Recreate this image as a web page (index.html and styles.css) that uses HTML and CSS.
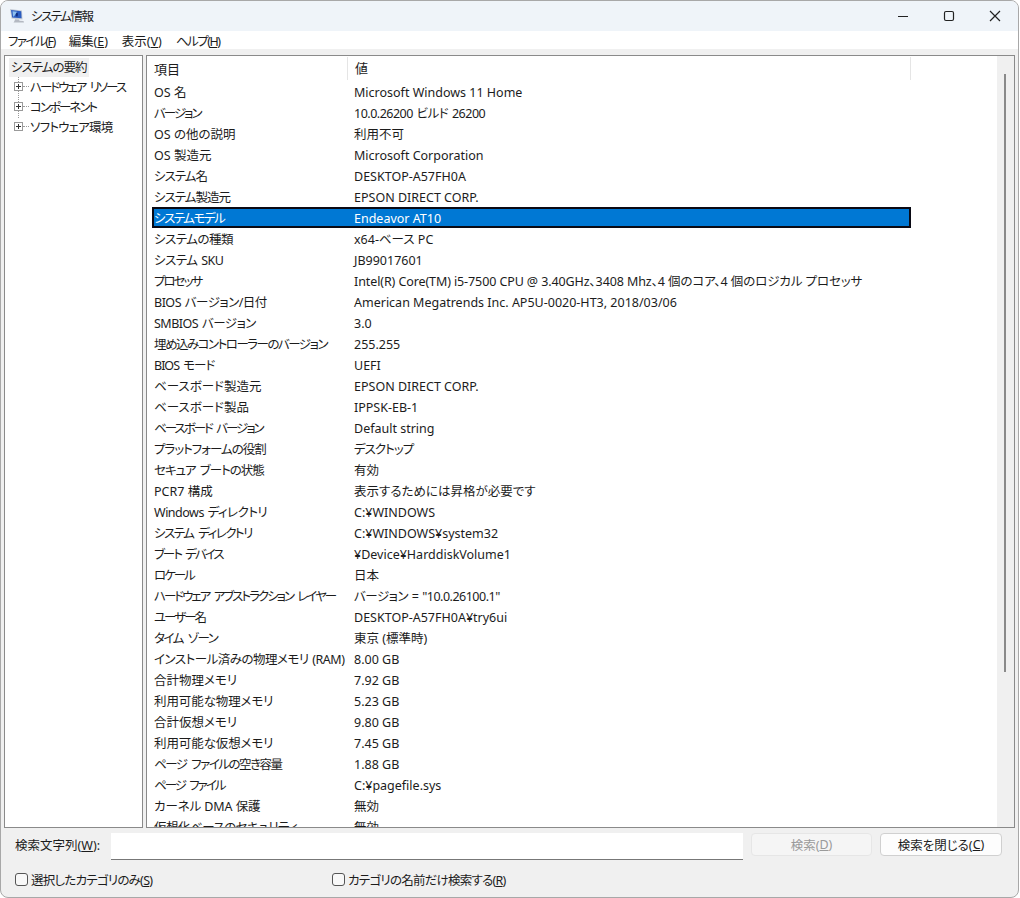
FILE: index.html
```html
<!DOCTYPE html>
<html lang="ja">
<head>
<meta charset="utf-8">
<title>システム情報</title>
<link rel="stylesheet" href="styles.css">
</head>
<body>
<div class="window">
  <header class="titlebar">
    <svg class="app-icon" width="16" height="16" viewBox="0 0 16 16">
      <path d="M1 1 L13 2.5 L13.5 11.5 L2.5 10.5 Z" fill="#c4cad4"/>
      <path d="M2 2 L12.2 3.3 L12.6 10.3 L3.2 9.5 Z" fill="#2a5cc0"/>
      <path d="M3.5 3.2 L8 3.8 L5 8.5 L4 8.4 Z" fill="#8fc0ee"/>
      <path d="M7 5 L9 5.3 L8.6 8.5 L6.8 8.3 Z" fill="#12307f"/>
      <path d="M6 11.2 L10 11.5 L10.5 12.8 L14.5 13 L15 14.5 L4.5 14.5 L5.5 13 Z" fill="#b4b9c2"/>
    </svg>
    <span class="title t3">システム情報</span>
    <div class="controls">
      <svg width="46" height="30" viewBox="0 0 46 30"><path d="M18 15.5H28" stroke="#222" stroke-width="1.2"/></svg>
      <svg width="46" height="30" viewBox="0 0 46 30"><rect x="18.5" y="10.5" width="9" height="9" rx="1.5" fill="none" stroke="#222" stroke-width="1.2"/></svg>
      <svg width="46" height="30" viewBox="0 0 46 30"><path d="M18 10L28 20M28 10L18 20" stroke="#222" stroke-width="1.2"/></svg>
    </div>
  </header>
  <nav class="menubar">
    <span class="menu t3">ファイル(<u>F</u>)</span>
    <span class="menu t0">編集(<u>E</u>)</span>
    <span class="menu">表示(<u>V</u>)</span>
    <span class="menu t3">ヘルプ(<u>H</u>)</span>
  </nav>
  <div class="panes">
    <aside class="tree">
      <div class="tree-root"><span class="tree-selected t2">システムの要約</span></div>
      <div class="tree-items">
        <div class="tree-item"><span class="plus"></span><span class="dash"></span><span class="t4">ハードウェア リソース</span></div>
        <div class="tree-item"><span class="plus"></span><span class="dash"></span><span class="t4">コンポーネント</span></div>
        <div class="tree-item"><span class="plus"></span><span class="dash"></span><span class="t15">ソフトウェア環境</span></div>
      </div>
    </aside>
    <main class="list">
      <div class="list-body">
        <div class="list-head">
          <span class="head-a">項目</span>
          <span class="head-b">値</span>
        </div>
        <div class="row"><span>OS 名</span><span>Microsoft Windows 11 Home</span></div>
        <div class="row"><span class="t4">バージョン</span><span class="t1">10.0.26200 ビルド 26200</span></div>
        <div class="row"><span>OS の他の説明</span><span>利用不可</span></div>
        <div class="row"><span>OS 製造元</span><span>Microsoft Corporation</span></div>
        <div class="row"><span class="t2">システム名</span><span>DESKTOP-A57FH0A</span></div>
        <div class="row"><span class="t2">システム製造元</span><span>EPSON DIRECT CORP.</span></div>
        <div class="row selected"><span class="t3">システムモデル</span><span>Endeavor AT10</span></div>
        <div class="row"><span class="t1">システムの種類</span><span>x64-ベース PC</span></div>
        <div class="row"><span class="t1">システム SKU</span><span>JB99017601</span></div>
        <div class="row"><span class="t4">プロセッサ</span><span class="t0">Intel(R) Core(TM) i5-7500 CPU @ 3.40GHz、3408 Mhz、4 個のコア、4 個のロジカル プロセッサ</span></div>
        <div class="row"><span class="t1">BIOS バージョン/日付</span><span>American Megatrends Inc. AP5U-0020-HT3, 2018/03/06</span></div>
        <div class="row"><span class="t1">SMBIOS バージョン</span><span>3.0</span></div>
        <div class="row"><span class="t3">埋め込みコントローラーのバージョン</span><span>255.255</span></div>
        <div class="row"><span class="t2">BIOS モード</span><span>UEFI</span></div>
        <div class="row"><span>ベースボード製造元</span><span>EPSON DIRECT CORP.</span></div>
        <div class="row"><span>ベースボード製品</span><span>IPPSK-EB-1</span></div>
        <div class="row"><span class="t4">ベースボード バージョン</span><span>Default string</span></div>
        <div class="row"><span class="t2">プラットフォームの役割</span><span class="t2">デスクトップ</span></div>
        <div class="row"><span class="t2">セキュア ブートの状態</span><span>有効</span></div>
        <div class="row"><span>PCR7 構成</span><span>表示するためには昇格が必要です</span></div>
        <div class="row"><span class="t1">Windows ディレクトリ</span><span>C:¥WINDOWS</span></div>
        <div class="row"><span class="t3">システム ディレクトリ</span><span>C:¥WINDOWS¥system32</span></div>
        <div class="row"><span class="t4">ブート デバイス</span><span>¥Device¥HarddiskVolume1</span></div>
        <div class="row"><span class="t4">ロケール</span><span>日本</span></div>
        <div class="row"><span class="t4">ハードウェア アブストラクション レイヤー</span><span class="t1">バージョン = "10.0.26100.1"</span></div>
        <div class="row"><span class="t4">ユーザー名</span><span>DESKTOP-A57FH0A¥try6ui</span></div>
        <div class="row"><span class="t3">タイム ゾーン</span><span>東京 (標準時)</span></div>
        <div class="row"><span class="t1">インストール済みの物理メモリ (RAM)</span><span>8.00 GB</span></div>
        <div class="row"><span>合計物理メモリ</span><span>7.92 GB</span></div>
        <div class="row"><span class="t0">利用可能な物理メモリ</span><span>5.23 GB</span></div>
        <div class="row"><span>合計仮想メモリ</span><span>9.80 GB</span></div>
        <div class="row"><span class="t0">利用可能な仮想メモリ</span><span>7.45 GB</span></div>
        <div class="row"><span class="t3">ページ ファイルの空き容量</span><span>1.88 GB</span></div>
        <div class="row"><span class="t4">ページ ファイル</span><span>C:¥pagefile.sys</span></div>
        <div class="row"><span class="t0">カーネル DMA 保護</span><span>無効</span></div>
        <div class="row"><span class="t1">仮想化ベースのセキュリティ</span><span>無効</span></div>
      </div>
      <div class="scrollbar"><div class="thumb"></div></div>
    </main>
  </div>
  <div class="search-row">
    <label class="search-label">検索文字列(<u>W</u>):</label>
    <div class="search-input"></div>
    <div class="btn disabled">検索(<u>D</u>)</div>
    <div class="btn">検索を閉じる(<u>C</u>)</div>
  </div>
  <div class="check-row">
    <label class="check check-a"><span class="box"></span><span class="t15">選択したカテゴリのみ(<u>S</u>)</span></label>
    <label class="check"><span class="box"></span><span class="t15">カテゴリの名前だけ検索する(<u>R</u>)</span></label>
  </div>
</div>
</body>
</html>
```
FILE: styles.css
```css
* { box-sizing: border-box; }
html, body { margin: 0; padding: 0; background: #fff; }
body { width: 1020px; height: 898px; overflow: hidden; font-family: "Noto Sans", "Noto Sans CJK JP", sans-serif; font-size: 12.5px; font-feature-settings: "palt"; color: #1c1c1c; white-space: nowrap; }
u { text-underline-offset: 1px; }
.t0 { letter-spacing: -0.1px; }
.t1 { letter-spacing: -0.5px; word-spacing: 1px; }
.t15 { letter-spacing: -0.75px; word-spacing: 1px; }
.t2 { letter-spacing: -1px; word-spacing: 2px; }
.t3 { letter-spacing: -1.5px; word-spacing: 3px; }
.t4 { letter-spacing: -2px; word-spacing: 3px; }
.window { width: 1019px; height: 898px; background: #f0f0f0; border: 1px solid #a8a8a8; border-radius: 8px; overflow: hidden; display: flex; flex-direction: column; }
.titlebar { height: 30px; flex: none; background: #eff4f9; display: flex; align-items: center; padding-left: 8px; }
.app-icon { flex: none; }
.title { margin: 0 0 2px 6px; }
.controls { margin-left: auto; display: flex; }
.menubar { height: 18px; flex: none; background: #fff; display: flex; align-items: center; padding-left: 7px; gap: 14px; }
.panes { height: 773px; flex: none; margin-top: 6px; padding: 0 3px; display: flex; gap: 3px; }
.tree { width: 139px; flex: none; background: #fff; border: 1px solid #8a8a8a; padding: 2px 0 0 4px; }
.tree-root { height: 19px; display: flex; align-items: center; }
.tree-selected { background: #f0f0f0; padding: 0 2px; line-height: 19px; }
.tree-items { margin-top: -1px; border-left: 1px dotted #999; margin-left: 9px; height: 42px; }
.tree-item { height: 20px; display: flex; align-items: center; margin-left: -5px; }
.plus { width: 9px; height: 9px; flex: none; border: 1px solid #9a9a9a; background: linear-gradient(#333, #333) center / 5px 1px no-repeat, linear-gradient(#333, #333) center / 1px 5px no-repeat, #fff; }
.dash { width: 6px; flex: none; margin: 0 1px 0 0; border-top: 1px dotted #999; }
.list { flex: 1; min-width: 0; background: #fff; border: 1px solid #8a8a8a; display: flex; overflow: hidden; }
.list-body { flex: 1; min-width: 0; overflow: hidden; padding-left: 5px; }
.list-head { height: 25px; display: flex; align-items: center; width: 759px; font-size: 13px; }
.head-a { width: 195px; padding-left: 2px; }
.head-b { flex: 1; height: 23px; line-height: 23px; border-left: 1px solid #e5e5e5; padding-left: 7px; border-right: 1px solid #e5e5e5; }
.row { width: 759px; height: 21px; display: grid; grid-template-columns: 200px 1fr; align-items: center; padding: 2px 0 0 2px; line-height: 19px; }
.selected { background: #0078d4; color: #fff; box-shadow: inset 0 0 0 2px #0a0a14; }
.scrollbar { width: 17px; flex: none; background: #f0f0f0; padding: 18px 0 0 7px; }
.thumb { width: 2px; height: 598px; background: #8a8a8a; }
.search-row { height: 36px; flex: none; display: flex; align-items: center; padding-left: 14px; }
.search-label { width: 96px; flex: none; margin-bottom: 4px; }
.search-input { width: 632px; height: 27px; flex: none; background: #fff; border-bottom: 1px solid #777; }
.btn { height: 23px; width: 122px; flex: none; margin: 0 0 3px 8px; background: #fdfdfd; border: 1px solid #d0d0d0; border-radius: 4px; display: flex; align-items: center; justify-content: center; }
.disabled { width: 121px; background: #f5f5f5; border-color: #e6e6e6; color: #9a9a9a; }
.check-row { display: flex; padding: 6px 0 0 14px; }
.check { display: flex; align-items: center; }
.check-a { width: 317px; }
.box { width: 13px; height: 13px; border: 1px solid #555; border-radius: 3px; background: #f8f8f8; margin-right: 3px; }
```
